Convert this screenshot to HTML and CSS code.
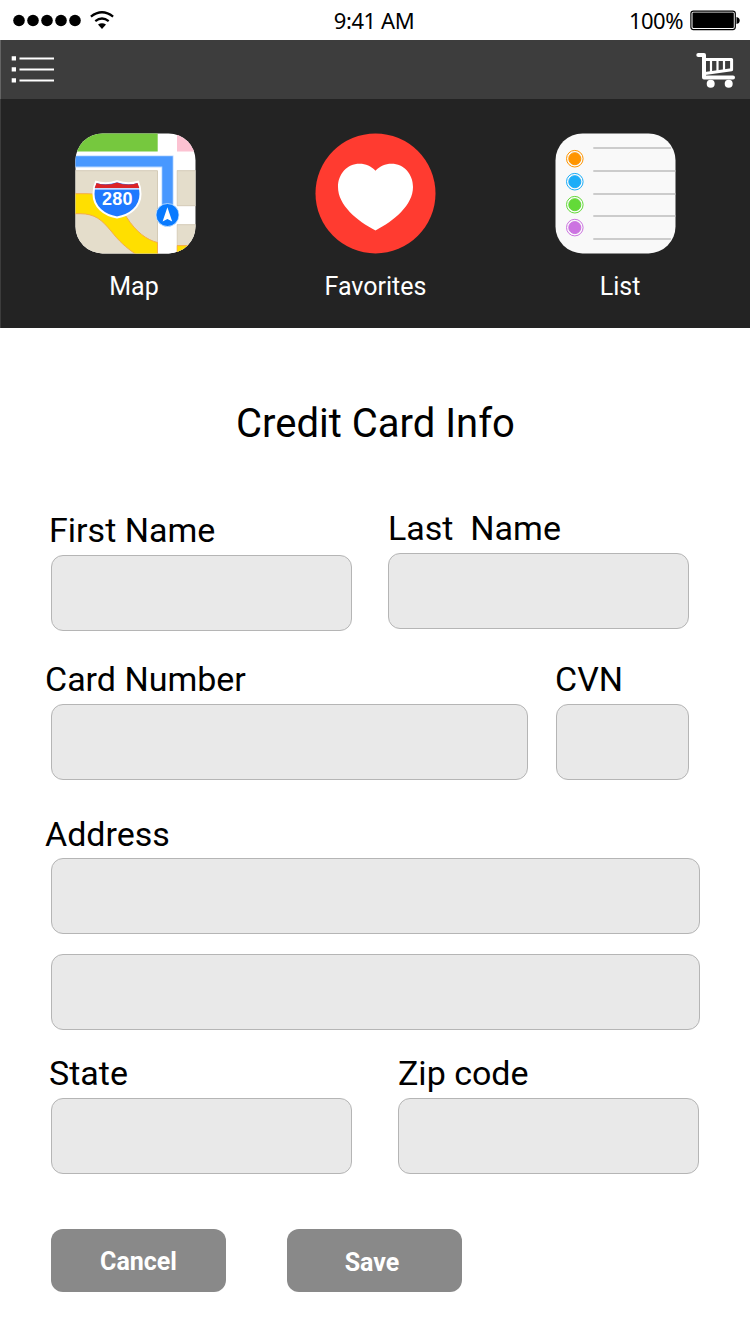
FILE: index.html
```html
<!DOCTYPE html>
<html lang="en">
<head>
<meta charset="utf-8">
<title>Credit Card Info</title>
<link rel="stylesheet" href="styles.css">
</head>
<body>
<div class="screen">
  <div class="status">
    <svg class="signal" viewBox="0 0 120 40" width="120" height="40">
      <circle cx="19" cy="20.500" r="5.800"/><circle cx="33" cy="20.500" r="5.800"/><circle cx="47" cy="20.500" r="5.800"/><circle cx="61" cy="20.500" r="5.800"/><circle cx="75" cy="20.500" r="5.800"/>
      <path d="M90.900 16.600Q102 7.900 113.100 16.600M95.300 21.100Q102 15.900 108.700 21.100" fill="none" stroke="#000" stroke-width="2.300"/>
      <path d="M98 24.600Q102 21.800 106 24.600L102 28.900Z"/>
    </svg>
    <span class="time">9:41 AM</span>
    <span class="power"><span class="percent">100%</span>
      <svg viewBox="690 0 50 40" width="50" height="40">
        <rect x="690.900" y="11.100" width="44.400" height="18.500" rx="2.500" fill="none" stroke="#000" stroke-width="1.200"/>
        <rect x="692.500" y="12.600" width="41.300" height="15.500" rx="1"/>
        <path d="M736.500 17Q739.700 17.500 739.700 20.500T736.500 24Z"/>
      </svg>
    </span>
  </div>
  <nav class="nav">
    <svg viewBox="11 40 45 59" width="45" height="59">
      <path fill="#fff" d="M11.700 56.200h4.300v4.400h-4.300zM11.700 67.200h4.300v4.400h-4.300zM11.700 78.200h4.300v4.400h-4.300z"/>
      <path stroke="#fff" stroke-width="2" d="M19.500 58.500H54M19.500 69.500H54M19.500 80.500H54"/>
    </svg>
    <svg viewBox="695 40 41 59" width="41" height="59" fill="none" stroke="#fff" stroke-linecap="round" stroke-linejoin="round">
      <path stroke-width="4" d="M698.300 55H704V77.600H733"/>
      <path stroke-width="3" d="M705 59.400H731.600V69.700L705 73.400"/>
      <path stroke-width="2.200" d="M711 60V72M717.500 60V71M724 60V70"/>
      <circle cx="710.700" cy="83.700" r="4" fill="#fff" stroke="none"/><circle cx="728.700" cy="83.700" r="4" fill="#fff" stroke="none"/>
    </svg>
  </nav>
  <section class="shortcuts">
    <a class="shortcut">
      <svg viewBox="0 0 121 121" width="121" height="121">
        <clipPath id="tile"><rect x=".5" y=".4" width="120" height="120" rx="27"/></clipPath>
        <g clip-path="url(#tile)">
          <rect width="121" height="121" fill="#fff"/>
          <path fill="#76c83e" d="M0 0H82.700V18.500H0z"/><path fill="#fcc2d2" d="M102 0H121V18.500H102z"/>
          <path fill="#e4ddcb" stroke="#d4cbb7" d="M-1 37.700H82.500V122H-1zM102 37.700H122V72.700H102zM102 91.700H122V122H102z"/>
          <path fill="#ffdf00" stroke="#f5ad4b" d="M-1 60.700H12C34 61 42 70 51.700 84.300C61 99 72 107 82.500 109.500V122H62C50 114 44 108 36 98C27 87 20 80.700 5 80.700H-1zM102 112.600H122V122H102z"/>
          <path fill="#fff" d="M83 38H101.500V121H83z"/>
          <path fill="none" stroke="#b9d8ff" stroke-width="12" d="M0 28.400H92.500V80"/>
          <path fill="none" stroke="#4898ff" stroke-width="10.400" d="M0 28.400H92.500V80"/>
        </g>
        <path d="M21 48.800Q31 52 42 48.200Q53 52 63 48.800Q65.500 54 65.500 61C65.500 74 55 82 42 84.500C29 82 18.500 74 18.500 61Q18.500 54 21 48.800Z" fill="#2079ff" stroke="#fff" stroke-width="2"/>
        <path d="M21.500 50Q31 53.500 42 49.400Q53 53.500 62.500 50L64.300 55H19.700Z" fill="#dc2427"/>
        <path d="M19 55.800H65" stroke="#fff" stroke-width="1.200"/>
        <text class="route" x="42.300" y="72.400" text-anchor="middle">280</text>
        <circle cx="92.500" cy="82" r="11.500" fill="#087aff" stroke="#d2e8ff" stroke-width=".8"/>
        <path fill="#fff" d="M92.400 74.200L97.200 88.600L92.400 86L87.600 88.600Z"/>
      </svg>
      <span class="name name-map">Map</span>
    </a>
    <a class="shortcut">
      <svg viewBox="0 0 121 121" width="121" height="121">
        <circle cx="60.500" cy="60.400" r="60" fill="#ff3b30"/>
        <path fill="#fff" d="M60.500 37.700C56 33 51 30.700 44.500 30.700C32 30.700 23 41 23 54C23 72 42 88 60.500 97.400C79 88 98 72 98 54C98 41 89 30.700 76.500 30.700C70 30.700 65 33 60.500 37.700Z"/>
      </svg>
      <span class="name">Favorites</span>
    </a>
    <a class="shortcut">
      <svg viewBox="0 0 121 121" width="121" height="121">
        <rect x=".5" y=".4" width="120" height="120" rx="27" fill="#f9f9f9"/>
        <path stroke="#bdbdbd" stroke-width="1.600" d="M38.300 15H116M38.300 38H120.500M38.300 61H120.500M38.300 83H120.500M38.300 106H116"/>
        <g fill="#ff9500" stroke="#ff9500"><circle cx="19.800" cy="25.700" r="8.300" fill="none"/><circle cx="19.800" cy="25.700" r="6"/></g>
        <g fill="#1badf8" stroke="#1badf8"><circle cx="19.800" cy="48.700" r="8.300" fill="none"/><circle cx="19.800" cy="48.700" r="6"/></g>
        <g fill="#63da38" stroke="#63da38"><circle cx="19.800" cy="71.700" r="8.300" fill="none"/><circle cx="19.800" cy="71.700" r="6"/></g>
        <g fill="#cc73e1" stroke="#cc73e1"><circle cx="19.800" cy="94.600" r="8.300" fill="none"/><circle cx="19.800" cy="94.600" r="6"/></g>
      </svg>
      <span class="name name-list">List</span>
    </a>
  </section>
  <form class="form">
    <h1 class="title">Credit Card Info</h1>
    <div class="row row-name">
      <label class="field half"><span class="label label-in">First Name</span><input class="box"></label>
      <label class="field half last"><span class="label label-flush">Last&nbsp; Name</span><input class="box"></label>
    </div>
    <div class="row row-card">
      <label class="field number"><span class="label">Card Number</span><input class="box"></label>
      <label class="field cvn"><span class="label label-cvn">CVN</span><input class="box"></label>
    </div>
    <div class="row row-address">
      <label class="field full"><span class="label">Address</span><input class="box"><input class="box"></label>
    </div>
    <div class="row row-region">
      <label class="field half"><span class="label label-in">State</span><input class="box"></label>
      <label class="field half"><span class="label label-flush">Zip code</span><input class="box"></label>
    </div>
    <div class="actions">
      <button type="button" class="button">Cancel</button>
      <button type="button" class="button save">Save</button>
    </div>
  </form>
</div>
</body>
</html>
```

FILE: styles.css
```css
* { box-sizing: border-box; }
body { margin: 0; background: #fff; }
.screen {
  width: 750px;
  height: 1334px;
  overflow: hidden;
  font-family: Roboto, "Liberation Sans", sans-serif;
  color: #000;
}
svg { display: block; flex: none; }

.status {
  display: grid;
  grid-template-columns: 1fr auto 1fr;
  height: 40px;
  font: 22px/40px "Noto Sans", "Open Sans", sans-serif;
}
.time { margin-left: -2px; letter-spacing: -0.4px; }
.power { display: flex; justify-content: flex-end; gap: 7px; padding-right: 10px; }
.percent { letter-spacing: -0.5px; }

.nav {
  display: flex;
  justify-content: space-between;
  height: 59px;
  padding: 0 14px 0 10px;
  border-left: 1px solid #646464;
  background: #3d3d3d;
}

.shortcuts {
  display: grid;
  grid-template-columns: repeat(3, 240px);
  justify-content: center;
  height: 229px;
  padding-top: 34px;
  border-left: 1px solid #3c3c3c;
  background: #232323;
}
.shortcut { display: flex; flex-direction: column; align-items: center; margin-top: -0.5px; color: #fff; }
.name { margin-top: 17px; font-size: 25px; line-height: 32px; }
.name-map { margin-right: 3px; }
.name-list { margin-left: 9px; }
.route { font: bold 18px "Liberation Sans", Arial, sans-serif; letter-spacing: 0.2px; fill: #fff; }

.form { padding: 71px 50px 0 51px; }
.title { margin: 0; font-size: 40px; font-weight: 400; line-height: 50px; text-align: center; }
.row { display: flex; }
.row-name { gap: 36px; margin-top: 61px; }
.row-card { gap: 28px; margin-top: 28px; }
.row-address { margin-top: 34px; }
.row-region { gap: 46px; margin-top: 23px; }
.field { display: flex; flex-direction: column; }
.half { width: 301px; }
.last { margin-top: -2px; }
.number { width: 477px; }
.cvn { width: 133px; }
.full { width: 649px; }
.label { margin-left: -6px; font-size: 34px; line-height: 40px; white-space: nowrap; }
.label-in { margin-left: -2px; }
.label-flush { margin-left: 0; }
.label-cvn { margin-left: -1px; }
.box {
  width: 100%;
  height: 76px;
  margin: 5px 0 0;
  padding: 0 16px;
  border: 1px solid #b5b5b5;
  border-radius: 12px;
  background: #e9e9e9;
  font: inherit;
}
.row-address .box { margin-top: 4px; }
.row-address .box + .box { margin-top: 20px; }

.actions { display: flex; gap: 61px; margin-top: 55px; }
.button {
  width: 175px;
  height: 63px;
  padding: 2px 0 0;
  border: 0;
  border-radius: 12px;
  background: #898989;
  color: #fff;
  font: bold 25px/30px Roboto, "Liberation Sans", sans-serif;
}
.save { padding: 4px 5px 0 0; }
```
